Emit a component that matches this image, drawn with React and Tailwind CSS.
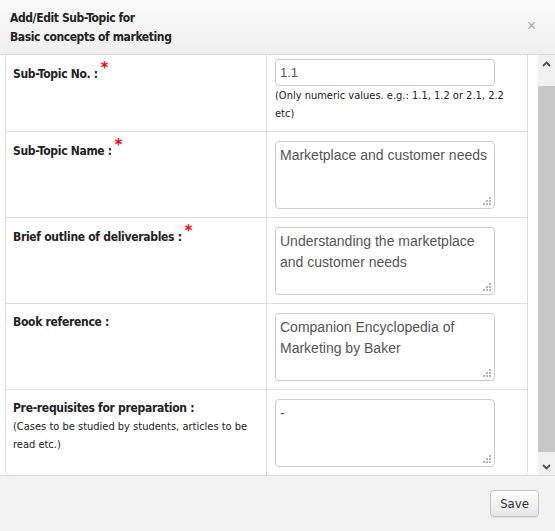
import React from 'react';

const rows = [
  {
    label: 'Sub-Topic No. :',
    required: true,
    kind: 'input',
    value: '1.1',
    help: '(Only numeric values. e.g.: 1.1, 1.2 or 2.1, 2.2 etc)',
  },
  { label: 'Sub-Topic Name :', required: true, kind: 'textarea', value: 'Marketplace and customer needs' },
  {
    label: 'Brief outline of deliverables :',
    required: true,
    kind: 'textarea',
    value: 'Understanding the marketplace and customer needs',
  },
  { label: 'Book reference :', kind: 'textarea', value: 'Companion Encyclopedia of Marketing by Baker' },
  {
    label: 'Pre-requisites for preparation :',
    note: '(Cases to be studied by students, articles to be read etc.)',
    kind: 'textarea',
    value: '-',
  },
];

function Grip() {
  return (
    <svg width="8" height="8" viewBox="0 0 8 8" className="absolute right-[3px] bottom-[3px]">
      <rect x="6" y="0" width="2" height="2" fill="#b5b5b5" />
      <rect x="3" y="3" width="2" height="2" fill="#b5b5b5" />
      <rect x="6" y="3" width="2" height="2" fill="#b5b5b5" />
      <rect x="0" y="6" width="2" height="2" fill="#b5b5b5" />
      <rect x="3" y="6" width="2" height="2" fill="#b5b5b5" />
      <rect x="6" y="6" width="2" height="2" fill="#b5b5b5" />
    </svg>
  );
}

function Field({ row }) {
  if (row.kind === 'input') {
    return (
      <div>
        <div className="w-[220px] h-[27px] border border-[#cccccc] rounded-[4px] px-[4px] flex items-center text-[13px] text-[#555] font-['Liberation_Sans',sans-serif]">
          {row.value}
        </div>
        <div className="mt-[1px] w-[232px] text-[11px] leading-[18px] text-[#222] font-['DejaVu_Sans_Condensed','DejaVu_Sans',sans-serif]">
          {row.help}
        </div>
      </div>
    );
  }
  return (
    <div className="relative w-[220px] h-[68px] border border-[#cccccc] rounded-[4px] px-[4px] pt-[3px] text-[14px] leading-[21px] text-[#555] font-['Liberation_Sans',sans-serif]">
      {row.value}
      <Grip />
    </div>
  );
}

function ScrollArrow({ up }) {
  return (
    <div className="h-[17px] flex items-center justify-center">
      <svg width="9" height="6" viewBox="0 0 9 6">
        <path
          d={up ? 'M1 5 L4.5 1.5 L8 5' : 'M1 1 L4.5 4.5 L8 1'}
          stroke="#505050"
          strokeWidth="1.8"
          fill="none"
        />
      </svg>
    </div>
  );
}

export default function App() {
  return (
    <div className="w-[555px] h-[531px] flex flex-col bg-white overflow-hidden font-['Liberation_Sans',sans-serif]">
      {/* header */}
      <div className="h-[55px] shrink-0 flex justify-between bg-gradient-to-b from-[#fafafa] to-[#f0f0f0] border-b border-[#dcdcdc]">
        <div className="pl-[10px] pt-[9px] text-[12px] leading-[19px] font-bold text-[#222] font-['DejaVu_Sans_Condensed','DejaVu_Sans',sans-serif] tracking-[-0.4px]">
          <div>Add/Edit Sub-Topic for</div>
          <div>Basic concepts of marketing</div>
        </div>
        <div className="pr-[19px] pt-[17px] text-[16px] leading-[18px] text-[#b0b0b0]">×</div>
      </div>

      {/* body */}
      <div className="h-[420px] shrink-0 flex">
        <div className="flex-1 overflow-hidden pl-[5px]">
          <div className="-mt-[6px] w-[523px] border border-[#dddddd] rounded-[4px]">
            {rows.map((row, i) => (
              <div
                key={i}
                className={`grid grid-cols-[261px_1fr] ${i > 0 ? 'border-t border-[#dddddd] h-[86px]' : 'h-[81px]'}`}
              >
                <div className={`border-r border-[#dddddd] pl-[7px] text-[#222] ${i === 0 ? 'pt-[15px]' : 'pt-[10px]'}`}>
                  <div className="text-[12px] leading-[17px] font-bold font-['DejaVu_Sans_Condensed','DejaVu_Sans',sans-serif] tracking-[-0.3px]">
                    {row.label}
                    {row.required && (
                      <span className="relative -top-[5px] ml-[3px] text-[16px] leading-none text-[#ff0000] font-bold">*</span>
                    )}
                  </div>
                  {row.note && (
                    <div className="w-[236px] mt-[1px] text-[11px] leading-[18px] font-['DejaVu_Sans_Condensed','DejaVu_Sans',sans-serif]">
                      {row.note}
                    </div>
                  )}
                </div>
                <div className="pl-[8px] pt-[9px]">
                  <Field row={row} />
                </div>
              </div>
            ))}
          </div>
        </div>
        {/* scrollbar */}
        <div className="w-[17px] shrink-0 flex flex-col bg-[#f1f1f1]">
          <ScrollArrow up />
          <div className="h-[14px]" />
          <div className="h-[366px] bg-[#c8c8c8]" />
          <div className="flex-1" />
          <ScrollArrow />
        </div>
      </div>

      {/* footer */}
      <div className="flex-1 bg-[#f3f3f3] border-t border-[#dcdcdc] flex justify-end items-start pr-[16px] pt-[14px]">
        <button className="w-[49px] h-[27px] rounded-[4px] border border-[#c4c4c4] bg-gradient-to-b from-[#ffffff] to-[#e6e6e6] shadow-[0_1px_1px_rgba(0,0,0,0.08)] text-[13px] text-[#333] font-['DejaVu_Sans_Condensed','DejaVu_Sans',sans-serif]">
          Save
        </button>
      </div>
    </div>
  );
}
